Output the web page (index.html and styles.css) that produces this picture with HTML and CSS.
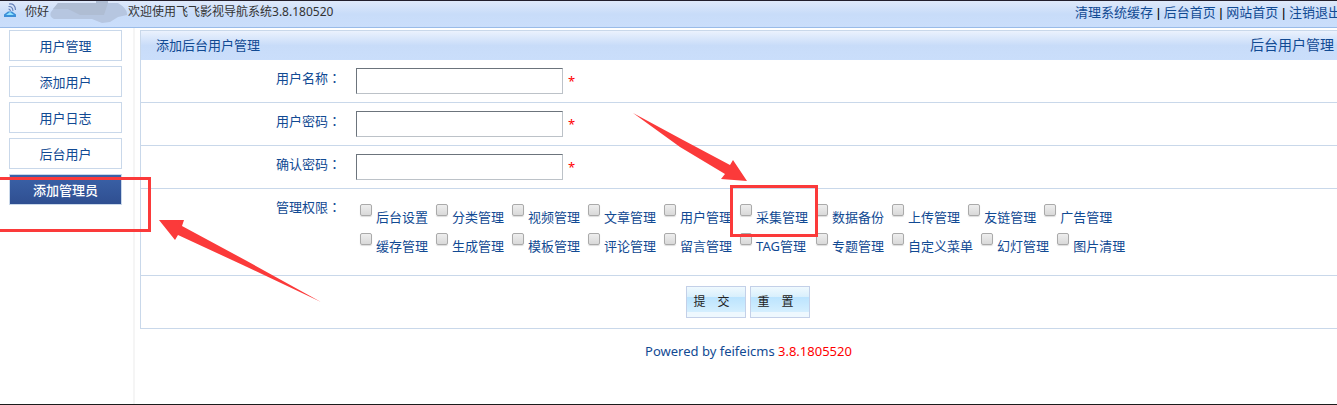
FILE: index.html
```html
<!DOCTYPE html>
<html lang="zh-CN">
<head>
<meta charset="utf-8">
<title>添加后台用户管理</title>
<link rel="stylesheet" href="styles.css">
</head>
<body>
<header class="topbar">
  <svg class="logo" width="14" height="18" viewBox="0 0 14 18" aria-hidden="true">
    <path d="M5 3Q11 2 11.500 9M4.500 5.500Q8.500 5 9 10M4.500 8Q6 8 6.500 10" fill="none" stroke="#6480b8" stroke-width="1.100"/>
    <path d="M0 13.500l4-3h4l4 3V16H0z" fill="#3c8fd8"/>
    <path d="M2 14l4-3 4 3z" fill="#8fe4ff"/>
  </svg>
  <span>你好</span>
  <svg class="mask" width="78" height="22" viewBox="0 0 78 22" aria-hidden="true">
    <path d="M8 2h38V0h12v2h10q10 6 9 12l-9 2-8 5-8 1-10-4H4q-5-2-3-7z" fill="#b6c6e0"/>
    <path d="M8 2h38V0h12v2l-4 12H30l-12-6H3z" fill="#afbdd3"/>
  </svg>
  <span>欢迎使用飞飞影视导航系统3.8.180520</span>
  <nav class="links"><a href="#">清理系统缓存</a> | <a href="#">后台首页</a> | <a href="#">网站首页</a> | <a href="#">注销退出</a></nav>
</header>
<div class="layout">
  <nav class="sidebar">
    <a href="#">用户管理</a>
    <a href="#">添加用户</a>
    <a href="#">用户日志</a>
    <a href="#">后台用户</a>
    <a href="#" class="active">添加管理员</a>
  </nav>
  <main class="main">
    <form class="panel">
      <div class="title"><span>添加后台用户管理</span><a href="#">后台用户管理</a></div>
      <div class="row"><label class="name" for="user">用户名称<span class="colon" lang="zh-TW">：</span></label><input class="text" id="user" type="text"><span class="star">*</span></div>
      <div class="row"><label class="name" for="pwd">用户密码<span class="colon" lang="zh-TW">：</span></label><input class="text" id="pwd" type="password"><span class="star">*</span></div>
      <div class="row"><label class="name" for="pwd2">确认密码<span class="colon" lang="zh-TW">：</span></label><input class="text" id="pwd2" type="password"><span class="star">*</span></div>
      <div class="row rights">
        <span class="name">管理权限<span class="colon" lang="zh-TW">：</span></span>
        <div class="checks">
          <div class="line">
            <label><input type="checkbox">后台设置</label><label><input type="checkbox">分类管理</label><label><input type="checkbox">视频管理</label><label><input type="checkbox">文章管理</label><label><input type="checkbox">用户管理</label><label><input type="checkbox">采集管理</label><label><input type="checkbox">数据备份</label><label><input type="checkbox">上传管理</label><label><input type="checkbox">友链管理</label><label><input type="checkbox">广告管理</label>
          </div>
          <div class="line">
            <label><input type="checkbox">缓存管理</label><label><input type="checkbox">生成管理</label><label><input type="checkbox">模板管理</label><label><input type="checkbox">评论管理</label><label><input type="checkbox">留言管理</label><label class="wide"><input type="checkbox">TAG管理</label><label><input type="checkbox">专题管理</label><label><input type="checkbox">自定义菜单</label><label><input type="checkbox">幻灯管理</label><label><input type="checkbox">图片清理</label>
          </div>
        </div>
      </div>
      <div class="actions"><button type="submit">提&emsp;交</button><button type="reset">重&emsp;置</button></div>
    </form>
    <footer class="footer">Powered by feifeicms <span>3.8.1805520</span></footer>
  </main>
</div>
<svg class="marks" width="820" height="310" viewBox="0 0 820 310" aria-hidden="true">
  <path d="M-4 178.500H149.500V230.500H-4M731.500 186.500H816.500V235.500H731.500z" fill="none" stroke="#fb3a3a" stroke-width="3"/>
  <path d="M159 220H184L182 226 246 260.500 321 302 246 266.500 178 235 175 240zM633 113L683 140 730 165 733 160 747 181 721 179 725 174 680 147z" fill="#fb3a3a"/>
</svg>
</body>
</html>
```
FILE: styles.css
```css
* { box-sizing: border-box; }
body {
  margin: 0;
  min-height: 100vh;
  display: flex;
  flex-direction: column;
  overflow: hidden;
  position: relative;
  border-top: 1px solid #221e2b;
  border-bottom: 1px solid #1c1c1c;
  background: #fff;
  color: #114a93;
  font: 13px/18px "Noto Sans", "Noto Sans CJK SC", sans-serif;
}
a { color: #114a93; text-decoration: none; }
.topbar {
  display: flex;
  height: 27px;
  padding-left: 4px;
  border-bottom: 1px solid #99bbe8;
  background: linear-gradient(#dfe9fa, #c8dcf9 50%, #cadefb);
  color: #333;
  font-size: 12px;
  line-height: 22px;
  white-space: nowrap;
}
.logo { margin-right: 7px; }
.mask { margin-left: 1px; }
.links {
  margin: 0 -4px 0 auto;
  color: #000;
  font: 13px/24px "Liberation Sans", "Noto Sans CJK SC", sans-serif;
}
.layout { display: flex; flex: 1; }
.sidebar {
  flex: none;
  display: flex;
  flex-direction: column;
  gap: 5px;
  width: 135px;
  padding: 2px 11px 0 9px;
  border-right: 2px solid #f5f5f5;
}
.sidebar a {
  height: 31px;
  border: 1px solid #c9d8ea;
  line-height: 30px;
  text-align: center;
}
.sidebar .active {
  background: linear-gradient(#3b62a8, #2f4f91);
  color: #fff;
  font-weight: 500;
}
.main { flex: 1; margin-right: -20px; padding: 2px 0 0 5px; }
.panel { border: 1px solid #c9d8ea; }
.title {
  display: flex;
  justify-content: space-between;
  height: 29px;
  padding: 0 22px 0 15px;
  background: linear-gradient(#ebf2fd, #c8dcf9 50%, #cadefb);
  line-height: 28px;
}
.title a { font-size: 14px; }
.row {
  display: flex;
  align-items: flex-start;
  height: 43px;
  padding-top: 8px;
  border-bottom: 1px solid #c9d8ea;
}
.name { flex: none; width: 215px; padding-left: 135px; line-height: 20px; }
.colon { font-family: "Noto Sans CJK TC", sans-serif; }
.text {
  width: 207px;
  height: 26px;
  padding: 2px 4px;
  border: 1px solid #bcc2c8;
  border-top-color: #6c747c;
  border-left-color: #6c747c;
  font: inherit;
}
.star { margin: 4px 0 0 5px; color: #f00; }
.rights { height: 87px; }
.checks { padding: 7px 0 0 4px; }
.line { display: flex; gap: 8px; height: 29px; white-space: nowrap; }
.line label { display: flex; gap: 4px; line-height: 26px; }
.line .wide { min-width: 68px; }
.line input {
  appearance: none;
  width: 12px;
  height: 12px;
  margin: 0;
  border: 1px solid #aaa;
  border-radius: 2px;
  background: linear-gradient(#eee, #d9d9d9);
  box-shadow: 0 1px 1px #ddd;
}
.actions { display: flex; justify-content: center; gap: 4px; padding: 10px 2px 10px 0; }
button {
  width: 60px;
  height: 32px;
  padding: 0 7px;
  border: 1px solid #c3d0e8;
  background: linear-gradient(#eff9fe, #d8effc 34%, #bce4fe 35%, #d5effe 84%, #eef8fe 85%);
  color: #222;
  font: 12px/18px "Liberation Sans", "Noto Sans CJK SC", sans-serif;
  text-align: left;
}
.footer { padding-top: 13px; text-align: center; }
.footer span { color: #f00; }
.marks { position: absolute; left: 0; top: -1px; pointer-events: none; }
```
